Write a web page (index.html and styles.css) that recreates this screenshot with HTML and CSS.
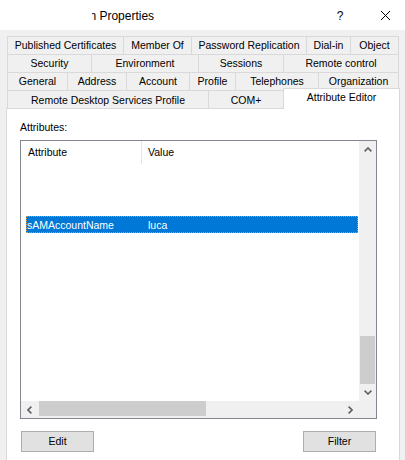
FILE: index.html
```html
<!DOCTYPE html>
<html>
<head>
<meta charset="utf-8">
<link rel="stylesheet" href="styles.css">
</head>
<body>
<div class="window">
  <div class="titlebar">
    <div class="title"><span class="title-text">n Properties</span></div>
    <div class="help">?</div>
    <div class="close">
      <svg width="11" height="11" viewBox="0 0 11 11"><path d="M1 1 L10 10 M10 1 L1 10" stroke="#000" stroke-width="1" fill="none"/></svg>
    </div>
  </div>
  <div class="tabs">
    <div class="tabrow r1">
      <div class="tab">Published Certificates</div>
      <div class="tab">Member Of</div>
      <div class="tab">Password Replication</div>
      <div class="tab">Dial-in</div>
      <div class="tab last">Object</div>
    </div>
    <div class="tabrow r2">
      <div class="tab">Security</div>
      <div class="tab">Environment</div>
      <div class="tab">Sessions</div>
      <div class="tab last">Remote control</div>
    </div>
    <div class="tabrow r3">
      <div class="tab">General</div>
      <div class="tab">Address</div>
      <div class="tab">Account</div>
      <div class="tab">Profile</div>
      <div class="tab">Telephones</div>
      <div class="tab last">Organization</div>
    </div>
    <div class="tabrow r4">
      <div class="tab">Remote Desktop Services Profile</div>
      <div class="tab">COM+</div>
      <div class="tab selected">Attribute Editor</div>
    </div>
  </div>
  <div class="panel">
    <div class="label">Attributes:</div>
    <div class="list">
      <div class="list-main">
        <div class="view">
          <div class="header">
            <div class="hcol1">Attribute</div>
            <div class="hsep"></div>
            <div class="hcol2">Value</div>
          </div>
          <div class="item selected-item">
            <span class="c1">sAMAccountName</span><span class="c2">luca</span>
          </div>
        </div>
        <div class="vbar">
          <div class="sbtn">
            <svg width="8" height="5" viewBox="0 0 8 5"><polyline points="0.6,4.4 4,1 7.4,4.4" stroke="#606060" stroke-width="1.6" fill="none"/></svg>
          </div>
          <div class="vtrack"><div class="vthumb"></div></div>
          <div class="sbtn">
            <svg width="8" height="5" viewBox="0 0 8 5"><polyline points="0.6,0.6 4,4 7.4,0.6" stroke="#606060" stroke-width="1.6" fill="none"/></svg>
          </div>
        </div>
      </div>
      <div class="hbar">
        <div class="sbtn">
          <svg width="5" height="8" viewBox="0 0 5 8"><polyline points="4.4,0.6 1,4 4.4,7.4" stroke="#606060" stroke-width="1.6" fill="none"/></svg>
        </div>
        <div class="htrack"><div class="hthumb"></div></div>
        <div class="sbtn">
          <svg width="5" height="8" viewBox="0 0 5 8"><polyline points="0.6,0.6 4,4 0.6,7.4" stroke="#606060" stroke-width="1.6" fill="none"/></svg>
        </div>
        <div class="corner"></div>
      </div>
    </div>
    <div class="buttons">
      <div class="btn edit">Edit</div>
      <div class="btn filter">Filter</div>
    </div>
  </div>
</div>
</body>
</html>
```
FILE: styles.css
```css
* { box-sizing: border-box; }
html, body { margin: 0; padding: 0; }
body {
  width: 405px;
  height: 460px;
  overflow: hidden;
  background: #f0f0f0;
  font-family: "Liberation Sans", Arial, sans-serif;
  font-size: 10.5px;
  color: #000;
}
.window { width: 405px; height: 460px; display: flex; flex-direction: column; }

.titlebar {
  height: 30px;
  background: #fff;
  display: flex;
  align-items: center;
  flex: none;
}
.title {
  margin-left: 92px;
  flex: 1;
  overflow: hidden;
  white-space: nowrap;
  font-size: 12px;
  line-height: 16px;
  padding-top: 1px;
}
.title-text { display: inline-block; margin-left: -2.6px; }
.help {
  width: 50px;
  text-align: center;
  font-size: 12px;
  padding-top: 1px;
}
.close {
  width: 40px;
  display: flex;
  justify-content: center;
  align-items: center;
  padding-left: 0px;
  padding-top: 1px;
}

.tabs {
  margin-top: 6px;
  margin-left: 7px;
  width: 393px;
  flex: none;
}
.tabrow {
  display: flex;
  height: 18px;
}
.tab {
  height: 18px;
  border-top: 1px solid #d9d9d9;
  border-left: 1px solid #d9d9d9;
  background: #f0f0f0;
  text-align: center;
  line-height: 17px;
  white-space: nowrap;
  overflow: hidden;
  flex: none;
}
.tab.last { border-right: 1px solid #d9d9d9; }

.r1 .tab:nth-child(1) { width: 116px; }
.r1 .tab:nth-child(2) { width: 68px; }
.r1 .tab:nth-child(3) { width: 115px; }
.r1 .tab:nth-child(4) { width: 44px; }
.r1 .tab:nth-child(5) { width: 49px; }

.r2 .tab:nth-child(1) { width: 84px; }
.r2 .tab:nth-child(2) { width: 107px; }
.r2 .tab:nth-child(3) { width: 85px; }
.r2 .tab:nth-child(4) { width: 116px; }

.r3 .tab:nth-child(1) { width: 60px; }
.r3 .tab:nth-child(2) { width: 59px; }
.r3 .tab:nth-child(3) { width: 63px; }
.r3 .tab:nth-child(4) { width: 46px; }
.r3 .tab:nth-child(5) { width: 83px; }
.r3 .tab:nth-child(6) { width: 81px; }

.r4 .tab:nth-child(1) { width: 201px; line-height: 19px; }
.r4 .tab:nth-child(2) { width: 75px; line-height: 19px; }
.tab.selected {
  width: 117px;
  height: 21px;
  margin-top: -2px;
  background: #fff;
  border-right: 1px solid #d9d9d9;
  position: relative;
  z-index: 2;
  line-height: 17px;
}

.panel {
  margin-left: 6px;
  width: 394px;
  flex: 1;
  background: #fff;
  border: 1px solid #d9d9d9;
  border-bottom: none;
  padding-left: 13px;
}
.label {
  margin-top: 12px;
  height: 13px;
  line-height: 13px;
}
.list {
  margin-top: 6px;
  width: 357px;
  height: 279px;
  border: 1px solid #828790;
  display: flex;
  flex-direction: column;
}
.list-main {
  height: 260px;
  display: flex;
}
.view {
  flex: 1;
  background: #fff;
  overflow: hidden;
}
.header {
  height: 23px;
  display: flex;
  align-items: stretch;
}
.hcol1 {
  width: 120px;
  padding-left: 7px;
  line-height: 23px;
}
.hsep {
  width: 1px;
  background: #e5e5e5;
}
.hcol2 {
  padding-left: 6px;
  line-height: 23px;
}
.item {
  height: 17px;
  display: flex;
  align-items: center;
  white-space: nowrap;
}
.selected-item {
  margin-top: 52px;
  margin-left: 5px;
  width: 332px;
  background: #0078d7;
  border: 1px dotted #e8902a;
  color: #fff;
}
.c1 { width: 121px; }

.vbar {
  width: 17px;
  background: #f0f0f0;
  display: flex;
  flex-direction: column;
}
.sbtn {
  width: 17px;
  height: 17px;
  display: flex;
  align-items: center;
  justify-content: center;
  flex: none;
}
.vtrack { flex: 1; }
.vthumb {
  margin-top: 178px;
  margin-left: 1px;
  width: 15px;
  height: 48px;
  background: #cdcdcd;
}
.hbar {
  height: 17px;
  background: #f0f0f0;
  display: flex;
}
.htrack { flex: 1; }
.hthumb {
  margin-left: 1px;
  width: 167px;
  height: 15px;
  margin-top: 0px;
  background: #cdcdcd;
}
.corner { width: 17px; }

.buttons {
  margin-top: 12px;
  width: 357px;
  display: flex;
  justify-content: space-between;
}
.btn {
  width: 73px;
  height: 21px;
  background: #e1e1e1;
  border: 1px solid #adadad;
  text-align: center;
  line-height: 19px;
}
.btn.edit { margin-left: 1px; }
.btn.filter { margin-right: 1px; }
```
